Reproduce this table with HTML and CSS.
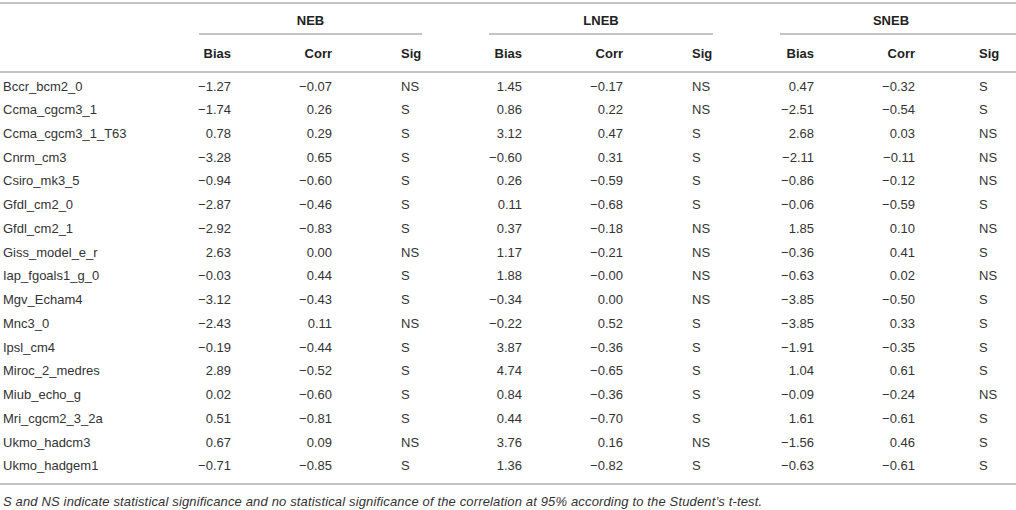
FILE: index.html
```html
<!DOCTYPE html>
<html>
<head>
<meta charset="utf-8">
<link rel="stylesheet" href="styles.css">
</head>
<body>
<table class="data">
  <colgroup>
    <col class="c-model">
    <col class="c-bias1"><col class="c-corr"><col class="c-sig">
    <col class="c-bias"><col class="c-corr"><col class="c-sig">
    <col class="c-bias3"><col class="c-corr"><col class="c-siglast">
  </colgroup>
  <thead>
    <tr class="group-row">
      <th></th>
      <th colspan="3" class="grp grp-first"><div class="grp-line"><span>NEB</span></div></th>
      <th colspan="3" class="grp"><div class="grp-line"><span>LNEB</span></div></th>
      <th colspan="3" class="grp grp-last"><div class="grp-line"><span class="grp-label-last">SNEB</span></div></th>
    </tr>
    <tr class="sub-row">
      <th></th>
      <th class="num">Bias</th><th class="num">Corr</th><th class="sig">Sig</th>
      <th class="num">Bias</th><th class="num">Corr</th><th class="sig">Sig</th>
      <th class="num">Bias</th><th class="num">Corr</th><th class="sig sig-last">Sig</th>
    </tr>
  </thead>
  <tbody>
    <tr><td class="model">Bccr_bcm2_0</td><td class="num">−1.27</td><td class="num">−0.07</td><td class="sig">NS</td><td class="num">1.45</td><td class="num">−0.17</td><td class="sig">NS</td><td class="num">0.47</td><td class="num">−0.32</td><td class="sig sig-last">S</td></tr>
    <tr><td class="model">Ccma_cgcm3_1</td><td class="num">−1.74</td><td class="num">0.26</td><td class="sig">S</td><td class="num">0.86</td><td class="num">0.22</td><td class="sig">NS</td><td class="num">−2.51</td><td class="num">−0.54</td><td class="sig sig-last">S</td></tr>
    <tr><td class="model">Ccma_cgcm3_1_T63</td><td class="num">0.78</td><td class="num">0.29</td><td class="sig">S</td><td class="num">3.12</td><td class="num">0.47</td><td class="sig">S</td><td class="num">2.68</td><td class="num">0.03</td><td class="sig sig-last">NS</td></tr>
    <tr><td class="model">Cnrm_cm3</td><td class="num">−3.28</td><td class="num">0.65</td><td class="sig">S</td><td class="num">−0.60</td><td class="num">0.31</td><td class="sig">S</td><td class="num">−2.11</td><td class="num">−0.11</td><td class="sig sig-last">NS</td></tr>
    <tr><td class="model">Csiro_mk3_5</td><td class="num">−0.94</td><td class="num">−0.60</td><td class="sig">S</td><td class="num">0.26</td><td class="num">−0.59</td><td class="sig">S</td><td class="num">−0.86</td><td class="num">−0.12</td><td class="sig sig-last">NS</td></tr>
    <tr><td class="model">Gfdl_cm2_0</td><td class="num">−2.87</td><td class="num">−0.46</td><td class="sig">S</td><td class="num">0.11</td><td class="num">−0.68</td><td class="sig">S</td><td class="num">−0.06</td><td class="num">−0.59</td><td class="sig sig-last">S</td></tr>
    <tr><td class="model">Gfdl_cm2_1</td><td class="num">−2.92</td><td class="num">−0.83</td><td class="sig">S</td><td class="num">0.37</td><td class="num">−0.18</td><td class="sig">NS</td><td class="num">1.85</td><td class="num">0.10</td><td class="sig sig-last">NS</td></tr>
    <tr><td class="model">Giss_model_e_r</td><td class="num">2.63</td><td class="num">0.00</td><td class="sig">NS</td><td class="num">1.17</td><td class="num">−0.21</td><td class="sig">NS</td><td class="num">−0.36</td><td class="num">0.41</td><td class="sig sig-last">S</td></tr>
    <tr><td class="model">Iap_fgoals1_g_0</td><td class="num">−0.03</td><td class="num">0.44</td><td class="sig">S</td><td class="num">1.88</td><td class="num">−0.00</td><td class="sig">NS</td><td class="num">−0.63</td><td class="num">0.02</td><td class="sig sig-last">NS</td></tr>
    <tr><td class="model">Mgv_Echam4</td><td class="num">−3.12</td><td class="num">−0.43</td><td class="sig">S</td><td class="num">−0.34</td><td class="num">0.00</td><td class="sig">NS</td><td class="num">−3.85</td><td class="num">−0.50</td><td class="sig sig-last">S</td></tr>
    <tr><td class="model">Mnc3_0</td><td class="num">−2.43</td><td class="num">0.11</td><td class="sig">NS</td><td class="num">−0.22</td><td class="num">0.52</td><td class="sig">S</td><td class="num">−3.85</td><td class="num">0.33</td><td class="sig sig-last">S</td></tr>
    <tr><td class="model">Ipsl_cm4</td><td class="num">−0.19</td><td class="num">−0.44</td><td class="sig">S</td><td class="num">3.87</td><td class="num">−0.36</td><td class="sig">S</td><td class="num">−1.91</td><td class="num">−0.35</td><td class="sig sig-last">S</td></tr>
    <tr><td class="model">Miroc_2_medres</td><td class="num">2.89</td><td class="num">−0.52</td><td class="sig">S</td><td class="num">4.74</td><td class="num">−0.65</td><td class="sig">S</td><td class="num">1.04</td><td class="num">0.61</td><td class="sig sig-last">S</td></tr>
    <tr><td class="model">Miub_echo_g</td><td class="num">0.02</td><td class="num">−0.60</td><td class="sig">S</td><td class="num">0.84</td><td class="num">−0.36</td><td class="sig">S</td><td class="num">−0.09</td><td class="num">−0.24</td><td class="sig sig-last">NS</td></tr>
    <tr><td class="model">Mri_cgcm2_3_2a</td><td class="num">0.51</td><td class="num">−0.81</td><td class="sig">S</td><td class="num">0.44</td><td class="num">−0.70</td><td class="sig">S</td><td class="num">1.61</td><td class="num">−0.61</td><td class="sig sig-last">S</td></tr>
    <tr><td class="model">Ukmo_hadcm3</td><td class="num">0.67</td><td class="num">0.09</td><td class="sig">NS</td><td class="num">3.76</td><td class="num">0.16</td><td class="sig">NS</td><td class="num">−1.56</td><td class="num">0.46</td><td class="sig sig-last">S</td></tr>
    <tr class="last-row"><td class="model">Ukmo_hadgem1</td><td class="num">−0.71</td><td class="num">−0.85</td><td class="sig">S</td><td class="num">1.36</td><td class="num">−0.82</td><td class="sig">S</td><td class="num">−0.63</td><td class="num">−0.61</td><td class="sig sig-last">S</td></tr>
  </tbody>
</table>
<p class="note">S and NS indicate statistical significance and no statistical significance of the correlation at 95% according to the Student’s t-test.</p>
</body>
</html>
```

FILE: styles.css
```css
html, body {
  margin: 0;
  padding: 0;
  background: #ffffff;
}

body {
  font-family: "Liberation Sans", Arial, sans-serif;
  font-size: 13px;
  color: #333333;
}

.data {
  width: 1016px;
  margin-top: 2px;
  border-collapse: collapse;
  table-layout: fixed;
  border-top: 2px solid #c4c4c4;
  border-bottom: 2px solid #c4c4c4;
}

.c-model { width: 180px; }
.c-bias1 { width: 51px; }
.c-corr { width: 101px; }
.c-sig { width: 90px; }
.c-bias { width: 100px; }
.c-bias3 { width: 101px; }
.c-siglast { width: 103px; }

th, td {
  padding: 0;
  line-height: 15px;
  white-space: nowrap;
}

th {
  font-weight: bold;
  color: #222222;
}

.group-row th {
  padding-top: 9px;
  padding-bottom: 0;
}

.grp {
  padding-left: 67px;
  text-align: center;
}

.grp-first {
  padding-left: 19px;
}

.grp-line {
  border-bottom: 2px solid #c4c4c4;
  padding-bottom: 5px;
}

.grp-label-last {
  padding-right: 16px;
}

.sub-row th {
  padding-top: 11px;
  padding-bottom: 10px;
  border-bottom: 2px solid #c4c4c4;
}

.num {
  text-align: right;
}

.sig {
  text-align: left;
  padding-left: 69px;
}

.sig-last {
  padding-left: 64px;
}

.model {
  text-align: left;
  padding-left: 3px;
}

tbody td {
  height: 23.75px;
  box-sizing: border-box;
}

tbody tr:first-child td {
  padding-top: 2px;
  height: 25.75px;
}

tbody tr.last-row td {
  padding-bottom: 6px;
  height: 29.75px;
}

.note {
  margin: 9px 0 0 0;
  padding-left: 3px;
  font-style: italic;
  line-height: 15px;
  letter-spacing: 0.15px;
}
```
